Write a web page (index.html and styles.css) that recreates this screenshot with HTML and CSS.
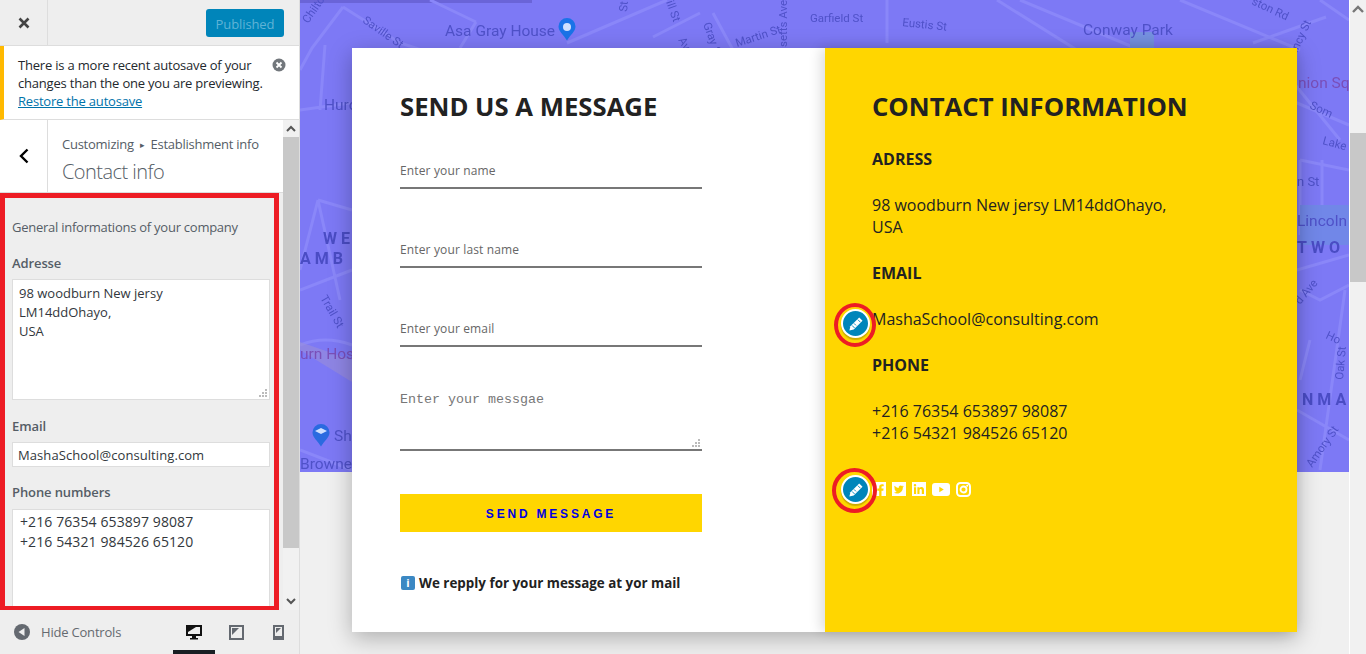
FILE: index.html
```html
<!DOCTYPE html>
<html lang="en">
<head>
<meta charset="utf-8">
<title>Contact info</title>
<link rel="stylesheet" href="styles.css">
</head>
<body>
<div class="app">
  <aside class="side">
    <header class="topbar">
      <div class="close">
        <svg width="14" height="14" viewBox="0 0 14 14"><path d="M2.500 2.500l9 9M11.500 2.500l-9 9" stroke="#444" stroke-width="2.600" fill="none"/></svg>
      </div>
      <div class="publish"><span class="publish-btn">Published</span></div>
    </header>
    <div class="notice">
      <p class="notice-text">There is a more recent autosave of your changes than the one you are previewing. <a class="notice-link">Restore the autosave</a></p>
      <svg class="notice-x" width="14" height="14" viewBox="0 0 14 14"><circle cx="7" cy="7" r="6.500" fill="#72777c"/><path d="M4.500 4.500l5 5M9.500 4.500l-5 5" stroke="#fff" stroke-width="1.800"/></svg>
    </div>
    <div class="panel">
      <div class="panel-main">
        <div class="section-head">
          <div class="back">
            <svg width="12" height="16" viewBox="0 0 12 16"><path d="M9.500 1.500L3 8l6.500 6.500" stroke="#000" stroke-width="2.400" fill="none"/></svg>
          </div>
          <div class="crumbs">
            <div class="crumb">Customizing<span class="crumb-sep">▸</span>Establishment info</div>
            <div class="section-title">Contact info</div>
          </div>
        </div>
        <div class="controls">
          <p class="desc">General informations of your company</p>
          <label class="label">Adresse</label>
          <div class="ta ta-address">98 woodburn New jersy<br>LM14ddOhayo,<br>USA
            <svg class="grip" width="9" height="9" viewBox="0 0 9 9"><path d="M6 0h2v2H6zM3 3h2v2H3zM6 3h2v2H6zM0 6h2v2H0zM3 6h2v2H3zM6 6h2v2H6z" fill="#bbb"/></svg>
          </div>
          <label class="label label-email">Email</label>
          <div class="inp">MashaSchool@consulting.com</div>
          <label class="label label-phone">Phone numbers</label>
          <div class="ta ta-phone">+216 76354 653897 98087<br>+216 54321 984526 65120</div>
        </div>
        <div class="red-box"></div>
      </div>
      <div class="side-scroll">
        <div class="arrow"><svg width="10" height="7" viewBox="0 0 10 7"><path d="M1 6l4-4 4 4" stroke="#555" stroke-width="2" fill="none"/></svg></div>
        <div class="track"><div class="thumb"></div></div>
        <div class="arrow"><svg width="10" height="7" viewBox="0 0 10 7"><path d="M1 1l4 4 4-4" stroke="#555" stroke-width="2" fill="none"/></svg></div>
      </div>
    </div>
    <footer class="foot">
      <svg class="hide-ico" width="16" height="16" viewBox="0 0 16 16"><circle cx="8" cy="8" r="8" fill="#646970"/><path d="M10.500 4v8L4.500 8z" fill="#eee"/></svg>
      <span class="hide-text">Hide Controls</span>
      <div class="devices">
        <div class="device device-on">
          <svg width="16" height="16" viewBox="0 0 16 16"><path d="M0 1h16v11H10v2h2v1.500H4V14h2v-2H0zM2 3v7h12V3z" fill="#111"/><path d="M2 3h8L2 8z" fill="#111"/></svg>
        </div>
        <div class="device">
          <svg width="15" height="16" viewBox="0 0 15 16"><path d="M0 1h15v15H0zM2 3v11h11V3z" fill="#646970"/><path d="M3 4h7L3 11z" fill="#646970"/></svg>
        </div>
        <div class="device">
          <svg width="11" height="16" viewBox="0 0 11 16"><path d="M0 1h11v15H0zM2 3v9h7V3z" fill="#646970"/><path d="M3 4h5L3 9z" fill="#646970"/></svg>
        </div>
      </div>
    </footer>
  </aside>

  <main class="preview">
    <div class="page">
      <div class="map">
        <svg class="map-svg" width="1049" height="472" viewBox="0 0 1049 472">
          <rect width="1049" height="472" fill="#7d79f5"/>
          <rect width="232" height="3" fill="#6a64d8"/>
          <g class="roads">
            <path d="M43 7L100 43L140 56M43 7L12 48L0 70M0 110L50 103M25 45L20 110M130 0L176 22M176 22L160 48M267 43L367 0M353 37L400 13M413 13L433 50"/>
            <path d="M587 0V43M697 0L820 77M720 0L953 97M953 43L1026 17M880 0L1000 50M1020 0L1049 20M975 60L1040 140M990 100L1049 125"/>
            <path d="M0 290L52 270M18 200L0 270M18 200L52 210M18 200L40 300M0 345Q25 335 52 345M0 450L52 470"/>
            <path d="M997 270L1049 255M1000 290L1020 300L1049 285M1020 470L1045 290M997 410L1049 440M1010 340L1000 380M1000 160L1049 170"/>
            <path d="M1000 235H1049M1000 160V235M1022 160V235"/>
          </g>
          <path d="M0 350L52 382V360L0 342z" fill="#9a8ed8" opacity=".6"/>
          <rect x="1000" y="205" width="49" height="40" fill="#7187e8"/>
          <rect x="830" y="32" width="24" height="16" fill="#7591e0"/>
          <path d="M267 18a8.500 8.500 0 0 1 8.500 8.500c0 5-5 8-8.500 14c-3.500-6-8.500-9-8.500-14a8.500 8.500 0 0 1 8.500-8.500z" fill="#1a73e8"/>
          <circle cx="267" cy="27" r="4" fill="#cfe0ff"/>
          <path d="M21 424a8.500 8.500 0 0 1 8.500 8.500c0 5-5 8-8.500 14c-3.500-6-8.500-9-8.500-14a8.500 8.500 0 0 1 8.500-8.500z" fill="#2a6ae0"/>
          <path d="M15 431l6-3 6 3-6 3z" fill="#cfe0ff"/>
          <text class="mlabel lg" x="145" y="36">Asa Gray House</text>
          <text class="mlabel lg" x="783" y="35">Conway Park</text>
          <text class="mlabel" transform="translate(62 22) rotate(35)">Saville St</text>
          <text class="mlabel" transform="translate(8 24) rotate(-55)">Chilto</text>
          <text class="mlabel" x="510" y="22">Garfield St</text>
          <text class="mlabel" transform="translate(602 26) rotate(6)">Eustis St</text>
          <text class="mlabel" transform="translate(951 4) rotate(25)">ston Rd</text>
          <text class="mlabel" transform="translate(991 66) rotate(-65)">Quincy St</text>
          <text class="mlabel" transform="translate(487 47) rotate(-90)">setts Ave</text>
          <text class="mlabel" transform="translate(327 12) rotate(-85)">St</text>
          <text class="mlabel" transform="translate(366 2) rotate(70)">ill St</text>
          <text class="mlabel" transform="translate(378 40) rotate(60)">Av</text>
          <text class="mlabel" transform="translate(403 24) rotate(70)">Gray S</text>
          <text class="mlabel" transform="translate(437 47) rotate(-18)">Martin St</text>
          <text class="mlabel lg" x="24" y="110">Huro</text>
          <text class="mwide" x="23" y="244">WE</text>
          <text class="mwide" x="0" y="264">AMB</text>
          <text class="mlabel" transform="translate(20 298) rotate(60)">Trail St</text>
          <text class="mlabel lg purple" x="0" y="359">urn Hos</text>
          <text class="mlabel lg" x="34" y="441">Sh</text>
          <text class="mlabel lg" x="0" y="469">Browne</text>
          <text class="mlabel lg purple" x="998" y="88">nion Sq</text>
          <text class="mlabel" transform="translate(1009 108) rotate(25)">Som</text>
          <text class="mlabel" transform="translate(1022 144) rotate(15)">Lake</text>
          <text class="mlabel md" x="997" y="186">n St</text>
          <text class="mlabel lg" x="997" y="226">Lincoln</text>
          <text class="mwide" x="997" y="253">TWO</text>
          <text class="mlabel" transform="translate(1000 305) rotate(-50)">d Ave</text>
          <text class="mlabel" transform="translate(1025 338) rotate(25)">Ho</text>
          <text class="mlabel" transform="translate(1043 380) rotate(-85)">Oak St</text>
          <text class="mwide" x="1002" y="405">NMA</text>
          <text class="mlabel" transform="translate(1012 468) rotate(-55)">Amory St</text>
        </svg>
      </div>
      <section class="card">
        <div class="col-form">
          <h2 class="h">SEND US A MESSAGE</h2>
          <div class="field">Enter your name</div>
          <div class="field">Enter your last name</div>
          <div class="field">Enter your email</div>
          <div class="field-area">Enter your messgae
            <svg class="grip" width="9" height="9" viewBox="0 0 9 9"><path d="M6 0h2v2H6zM3 3h2v2H3zM6 3h2v2H6zM0 6h2v2H0zM3 6h2v2H3zM6 6h2v2H6z" fill="#bbb"/></svg>
          </div>
          <div class="send">SEND MESSAGE</div>
          <p class="note"><span class="info">i</span>We repply for your message at yor mail</p>
        </div>
        <div class="col-info">
          <h2 class="h">CONTACT INFORMATION</h2>
          <h3 class="sub">ADRESS</h3>
          <p class="txt">98 woodburn New jersy LM14ddOhayo,<br>USA</p>
          <h3 class="sub">EMAIL</h3>
          <p class="txt">MashaSchool@consulting.com</p>
          <h3 class="sub">PHONE</h3>
          <p class="txt">+216 76354 653897 98087<br>+216 54321 984526 65120</p>
          <div class="social">
            <svg width="14" height="14" viewBox="0 0 14 14"><path d="M0 0h14v14H9.500V8.700h1.800l.3-2.100H9.500V5.300c0-.6.200-1 1-1h1.200V2.400c-.3 0-1-.1-1.700-.1-1.700 0-2.800 1-2.800 2.800v1.500H5.300v2.100h1.900V14H0z" fill="#fff"/></svg>
            <svg width="14" height="14" viewBox="0 0 14 14"><path fill-rule="evenodd" d="M0 0h14v14H0zM11.500 4.300c-.4.200-.7.300-1.100.3.400-.2.700-.6.900-1-.4.200-.8.400-1.200.5a2 2 0 0 0-3.400 1.800c-1.600-.1-3.100-.9-4.100-2.100-.5.900-.3 2 .6 2.600-.3 0-.6-.1-.9-.2 0 1 .7 1.800 1.600 2-.3.100-.6.100-.9 0 .3.800 1 1.400 1.900 1.400-.9.700-2 1-3.000.9a5.800 5.800 0 0 0 8.900-5.100c.5-.3.800-.7 1.200-1.100z" fill="#fff"/></svg>
            <svg width="14" height="14" viewBox="0 0 14 14"><path fill-rule="evenodd" d="M0 0h14v14H0zM2 5.300v6.700h2.100V5.300zM3 2a1.200 1.200 0 1 0 0 2.500A1.200 1.200 0 0 0 3 2zM5.400 5.300v6.700h2.100V8.500c0-1 .4-1.500 1.200-1.500s1.100.6 1.100 1.500V12H12V8c0-1.900-1-2.900-2.400-2.900-1 0-1.700.4-2.100 1.100V5.300z" fill="#fff"/></svg>
            <svg width="18" height="13" viewBox="0 0 18 13"><path fill-rule="evenodd" d="M3 0h12a3 3 0 0 1 3 3v7a3 3 0 0 1-3 3H3a3 3 0 0 1-3-3V3a3 3 0 0 1 3-3zM7.300 3.700v5.600l4.500-2.800z" fill="#fff"/></svg>
            <svg width="15" height="15" viewBox="0 0 15 15"><rect x="1" y="1" width="13" height="13" rx="3.500" fill="none" stroke="#fff" stroke-width="2"/><circle cx="7.500" cy="7.500" r="3" fill="none" stroke="#fff" stroke-width="1.800"/><circle cx="11.200" cy="3.800" r="1" fill="#fff"/></svg>
          </div>
        </div>
      </section>
      <div class="pencil pencil-a"><svg width="16" height="16" viewBox="0 0 16 16"><path d="M11.200 1.500l3.300 3.300-8.800 8.800-4.300 1 1-4.300z" fill="#fff"/><path d="M9.800 3.600l2.600 2.600M4 9.400l2.600 2.600M6 7.400l2 2" stroke="#0085ba" stroke-width=".9" fill="none"/></svg></div>
      <div class="pencil pencil-b"><svg width="16" height="16" viewBox="0 0 16 16"><path d="M11.200 1.500l3.300 3.300-8.800 8.800-4.300 1 1-4.300z" fill="#fff"/><path d="M9.800 3.600l2.600 2.600M4 9.400l2.600 2.600M6 7.400l2 2" stroke="#0085ba" stroke-width=".9" fill="none"/></svg></div>
      <div class="ring ring-a"></div>
      <div class="ring ring-b"></div>
    </div>
    <div class="page-scroll">
      <div class="arrow-lg"><svg width="12" height="8" viewBox="0 0 12 8"><path d="M1 7l5-5 5 5" stroke="#777" stroke-width="2.400" fill="none"/></svg></div>
      <div class="page-track"><div class="page-thumb"></div></div>
    </div>
  </main>
</div>
</body>
</html>
```
FILE: styles.css
```css
* { box-sizing: border-box; }
html, body { margin: 0; height: 100%; overflow: hidden; }
body { font-family: "Open Sans", "Noto Sans", sans-serif; color: #23282d; background: #eee; }
.app { display: flex; width: 1366px; height: 654px; }

/* sidebar */
.side { width: 300px; height: 654px; flex: none; display: flex; flex-direction: column; background: #eee; border-right: 1px solid #ddd; }
.topbar { height: 46px; flex: none; display: flex; border-bottom: 1px solid #ddd; }
.close { width: 48px; display: flex; align-items: center; justify-content: center; border-right: 1px solid #ddd; }
.publish { flex: 1; display: flex; justify-content: flex-end; padding: 9px 15px 0 0; }
.publish-btn { width: 78px; height: 28px; background: #0085ba; border-radius: 3px; color: #5fb3d6; font-size: 13px; line-height: 30px; text-align: center; letter-spacing: -.1px; }
.notice { height: 74px; flex: none; position: relative; background: #fff; border-left: 4px solid #ffb900; border-bottom: 1px solid #ddd; padding: 10px 30px 0 14px; }
.notice-text { margin: 0; font-size: 13px; line-height: 18px; width: 260px; letter-spacing: -.2px; }
.notice-link { color: #0073aa; text-decoration: underline; display: block; }
.notice-x { position: absolute; right: 13px; top: 12px; }
.panel { flex: 1; min-height: 0; display: flex; }
.panel-main { width: 283px; flex: none; position: relative; overflow: hidden; background: #eee; }
.section-head { height: 73px; display: flex; background: #fff; border-bottom: 1px solid #ddd; }
.back { width: 48px; flex: none; display: flex; align-items: center; justify-content: center; border-right: 1px solid #ddd; }
.crumbs { padding: 15px 0 0 14px; }
.crumb { font-size: 13px; line-height: 18px; color: #555d66; white-space: nowrap; letter-spacing: -.25px; }
.crumb-sep { font-size: 9px; margin: 0 6px; vertical-align: 1px; }
.section-title { font-size: 20px; font-weight: 300; line-height: 26px; margin-top: 5px; color: #555d66; letter-spacing: -.55px; }
.controls { padding: 26px 13px 0 12px; }
.desc { margin: 0 0 18px; font-size: 13px; line-height: 17px; color: #555d66; letter-spacing: -.25px; }
.label { display: block; font-size: 13px; font-weight: 600; line-height: 18px; color: #555d66; letter-spacing: -.1px; }
.label-email { margin-top: 17px; }
.label-phone { margin-top: 16px; }
.ta, .inp { background: #fff; border: 1px solid #ddd; font-size: 13px; color: #32373c; position: relative; }
.ta { padding: 4px 6px; line-height: 19px; }
.ta-address { height: 121px; margin-top: 7px; }
.ta-phone { height: 121px; margin-top: 8px; padding: 2px 7px; line-height: 20px; font-size: 14px; letter-spacing: .1px; }
.inp { height: 25px; margin-top: 7px; padding: 0 5px; line-height: 25px; letter-spacing: .08px; }
.grip { position: absolute; right: 1px; bottom: 1px; }
.red-box { position: absolute; left: 0; top: 73px; width: 279px; height: 418px; border: 5px solid #ed1c24; pointer-events: none; }
.side-scroll { flex: 1; display: flex; flex-direction: column; background: #f1f1f1; }
.arrow { height: 17px; display: flex; align-items: center; justify-content: center; }
.track { flex: 1; background: #f1f1f1; }
.thumb { height: 411px; background: #c8c8c8; }
.foot { height: 44px; flex: none; display: flex; align-items: center; padding-left: 14px; position: relative; }
.hide-text { margin-left: 11px; font-size: 13px; color: #656a70; letter-spacing: -.2px; white-space: nowrap; }
.devices { display: flex; margin-left: auto; height: 44px; }
.device { width: 42px; display: flex; align-items: center; justify-content: center; border-bottom: 4px solid transparent; padding-top: 3px; }
.device-on { border-bottom-color: #191e23; }

/* preview */
.preview { flex: 1; display: flex; min-width: 0; background: #f1f1f1; }
.page { width: 1049px; position: relative; background: #f0f0f0; }
.map { height: 472px; overflow: hidden; }
.map-svg { display: block; filter: blur(.45px); }
.roads path { stroke: #8a87f9; stroke-width: 3; fill: none; }
.mlabel { font-family: Roboto, sans-serif; fill: #4f51c8; font-size: 11.500px; }
.mlabel.md { font-size: 13px; }
.mlabel.lg { font-size: 15.500px; }
.mlabel.purple { fill: #7a4fb8; }
.mwide { font-family: Roboto, sans-serif; font-weight: 700; fill: #4a4cc4; font-size: 16px; letter-spacing: 4px; }
.card { position: absolute; left: 52px; top: 48px; width: 945px; height: 584px; display: flex; box-shadow: 0 6px 22px rgba(0,0,0,.28); }
.col-form { width: 473px; background: #fff; padding: 41px 123px 0 48px; }
.col-info { flex: 1; background: #ffd600; padding: 41px 100px 0 47px; position: relative; box-shadow: -4px 0 12px rgba(0,0,0,.14); }
.h { margin: 0; font-size: 25.700px; line-height: 36px; font-weight: 700; color: #222; white-space: nowrap; }
.field { height: 41px; margin-bottom: 38px; font-size: 12px; line-height: 16px; color: #666; border-bottom: 2px solid #777; padding-top: 15px; letter-spacing: .14px; }
.h + .field { margin-top: 23px; }
.field-area { height: 66px; position: relative; font-family: "Liberation Mono", monospace; font-size: 13.330px; color: #777; border-bottom: 2px solid #777; padding-top: 7px; }
.send { margin-top: 43px; height: 38px; background: #ffd600; color: #0000e0; font-family: "Liberation Sans", Arial, sans-serif; font-weight: 700; font-size: 12px; letter-spacing: 2.800px; line-height: 40px; text-align: center; }
.note { margin: 42px 0 0; font-size: 13.400px; line-height: 18px; font-weight: 700; color: #222; white-space: nowrap; display: flex; align-items: center; }
.info { width: 14px; height: 14px; margin: 0 4px 0 1px; background: #3b88c3; border-radius: 2px; color: #fff; font-size: 11px; line-height: 14px; text-align: center; }
.sub { margin: 18px 0 0; font-size: 16px; line-height: 22px; font-weight: 700; color: #222; }
.h + .sub { margin-top: 23px; }
.txt { margin: 24px 0 24px; font-size: 16px; line-height: 22px; color: #222; }
.social { display: flex; align-items: center; gap: 6px; margin-top: 37px; height: 16px; }
.pencil { position: absolute; width: 29px; height: 29px; border-radius: 50%; background: #0085ba; border: 2px solid #fff; display: flex; align-items: center; justify-content: center; box-shadow: 0 2px 1px rgba(0,0,0,.2); }
.pencil-a { left: 541px; top: 309px; }
.pencil-b { left: 541px; top: 475px; }
.ring { position: absolute; border-radius: 50%; border: 4px solid #ed1c24; }
.ring-a { left: 534px; top: 303px; width: 42px; height: 44px; }
.ring-b { left: 532px; top: 468px; width: 45px; height: 45px; }
.page-scroll { flex: 1; display: flex; flex-direction: column; background: #f1f1f1; border-left: 1px solid #fff; }
.arrow-lg { height: 17px; display: flex; align-items: center; justify-content: center; }
.page-track { flex: 1; padding-top: 116px; }
.page-thumb { height: 149px; background: #c8c8c8; }
```
